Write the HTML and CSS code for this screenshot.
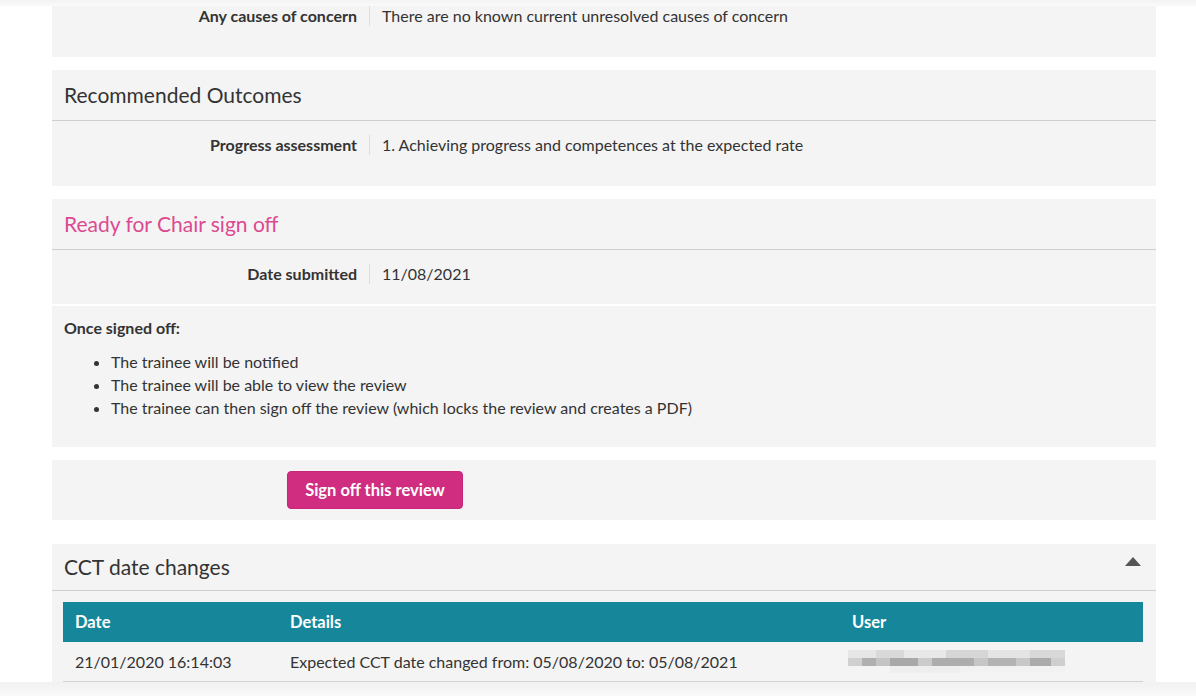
FILE: index.html
```html
<!DOCTYPE html>
<html lang="en">
<head>
<meta charset="UTF-8"/>
<meta name="viewport" content="width=device-width,initial-scale=1.0"/>
<title>Review — Chair sign off</title>
<link rel="stylesheet" href="styles.css">
</head>
<body>

<div class="shade-top"></div>

<main class="page">
  <section class="panel first">
    <div class="row">
      <div class="label">Any causes of concern</div>
      <div class="value">There are no known current unresolved causes of concern</div>
    </div>
  </section>

  <section class="panel">
    <h2 class="panel-head">Recommended Outcomes</h2>
    <div class="row tall">
      <div class="label">Progress assessment</div>
      <div class="value">1. Achieving progress and competences at the expected rate</div>
    </div>
  </section>

  <section class="panel">
    <h2 class="panel-head pink">Ready for Chair sign off</h2>
    <div class="row">
      <div class="label">Date submitted</div>
      <div class="value">11/08/2021</div>
    </div>
    <div class="notes">
      <p class="notes-title">Once signed off:</p>
      <ul>
        <li>The trainee will be notified</li>
        <li>The trainee will be able to view the review</li>
        <li>The trainee can then sign off the review (which locks the review and creates a PDF)</li>
      </ul>
    </div>
  </section>

  <section class="panel actions">
    <button class="btn-sign">Sign off this review</button>
  </section>

  <section class="panel">
    <div class="panel-head cct">
      <h2>CCT date changes</h2>
      <span class="caret"></span>
    </div>
    <table class="changes">
      <thead>
        <tr><th class="c-date">Date</th><th class="c-details">Details</th><th>User</th></tr>
      </thead>
      <tbody>
        <tr>
          <td>21/01/2020 16:14:03</td>
          <td>Expected CCT date changed from: 05/08/2020 to: 05/08/2021</td>
          <td><span class="blurred"></span></td>
        </tr>
      </tbody>
    </table>
  </section>
</main>

<div class="shade-bottom"></div>

</body>
</html>
```

FILE: styles.css
```css
* { box-sizing:border-box; }
body { margin:0; height:696px; overflow:hidden; display:flex; flex-direction:column; font-family:Lato,"Open Sans",sans-serif; font-size:16px; color:#333; background:#fff; }
.shade-top { height:6px; flex:none; background:linear-gradient(#f3f3f3,#fafafa); }
.shade-bottom { height:14px; flex:none; background:linear-gradient(#f1f1f1,#f9f9f9); }
.page { flex:1; overflow:hidden; padding:0 40px 0 52px; }

.panel { background:#f4f4f4; margin-bottom:13px; }
.panel.first { margin-top:-14px; }
.panel-head { margin:0; padding:12px 12px; font-size:21px; font-weight:normal; line-height:26px; border-bottom:1px solid #cfcfcf; color:#333; }
.panel-head.pink { color:#dc4a91; }

.row { display:flex; align-items:center; padding:14px 0 20px; line-height:20px; }
.row.tall, .panel.first .row { padding-bottom:31px; }
.label { width:317px; flex:none; text-align:right; font-weight:bold; padding-right:12px; }
.value { border-left:1px solid #dedede; padding-left:12px; }

.notes { border-top:2px solid #fff; padding:12px 12px 28px; }
.notes-title { margin:0; font-weight:bold; line-height:20px; }
.notes ul { margin:12px 0 0; padding-left:47px; line-height:23px; }

.actions { padding:11px 0 11px 235px; margin-bottom:24px; }
.btn-sign { font-family:inherit; font-size:16.5px; font-weight:bold; color:#fff; background:#d02c80; border:1px solid #c72679; border-radius:4px; height:38px; width:176px; padding:0; cursor:pointer; }

.panel-head.cct { display:flex; justify-content:space-between; align-items:center; padding:9px 15px 10px 12px; }
.panel-head.cct h2 { margin:0; font-size:21px; font-weight:normal; line-height:27px; }
.caret { width:0; height:0; border-left:8px solid transparent; border-right:8px solid transparent; border-bottom:9px solid #555; margin-top:-10px; }

.changes { margin:11px 13px 0 11px; width:1080px; border-collapse:collapse; }
.changes th { background:#16879a; color:#fff; text-align:left; font-size:16.5px; font-weight:bold; height:40px; padding:0 12px; }
.changes th.c-date { width:215px; }
.changes th.c-details { width:562px; }
.changes td { height:39px; padding:0 12px; border-bottom:1px solid #d4d4d4; }
.blurred { display:inline-block; vertical-align:middle; width:217px; height:23px; margin-left:-4px;
  background:
    linear-gradient(to right, #d0d0d0 0 14px, #b0b0b0 14px 28px, #c4c4c4 28px 42px, #a8a8a8 42px 70px, #cbcbcb 70px 84px, #adadad 84px 126px, #c6c6c6 126px 140px, #b3b3b3 140px 168px, #c8c8c8 168px 182px, #ababab 182px 203px, #cfcfcf 203px 217px) 0 8px / 217px 8px no-repeat,
    linear-gradient(to right, #e6e6e6 0 28px, #d9d9d9 28px 56px, #e8e8e8 56px 98px, #d6d6d6 98px 140px, #e4e4e4 140px 182px, #d8d8d8 182px 217px) 0 0 / 217px 8px no-repeat,
    linear-gradient(to right, #f4f4f4 0 42px, #eeeeee 42px 112px, #f2f2f2 112px 217px) 0 16px / 217px 7px no-repeat; }
```
